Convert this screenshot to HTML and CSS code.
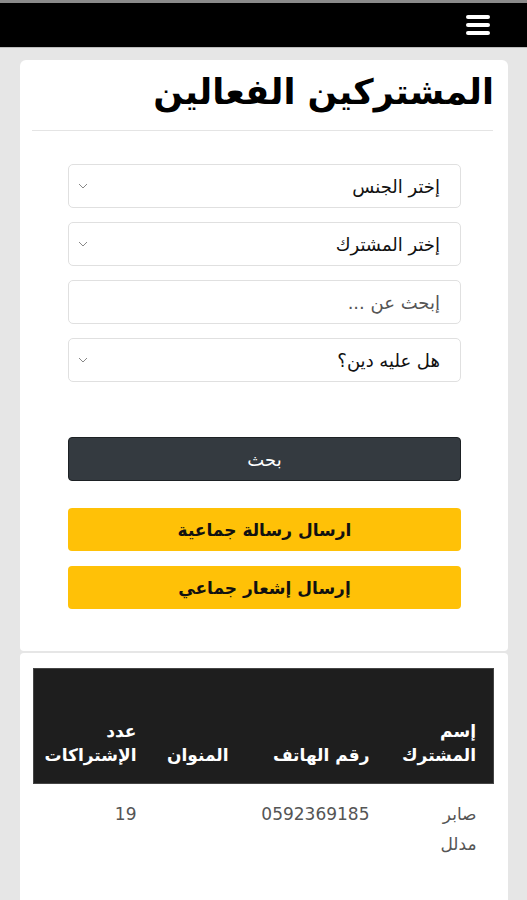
FILE: index.html
```html
<!DOCTYPE html>
<html lang="ar" dir="rtl">
<head>
<meta charset="utf-8">
<title>المشتركين الفعالين</title>
<link rel="stylesheet" href="styles.css">
</head>
<body>
<nav class="navbar">
  <button class="menu-btn" aria-label="menu">
    <svg width="24" height="21" viewBox="0 0 24 21"><rect x="0" y="0" width="24" height="4" rx="2" fill="#fff"/><rect x="0" y="8" width="24" height="4" rx="2" fill="#fff"/><rect x="0" y="16" width="24" height="4" rx="2" fill="#fff"/></svg>
  </button>
</nav>
<main class="page">
  <section class="card card-form">
    <h1 class="title">المشتركين الفعالين</h1>
    <hr class="sep">
    <form class="filters">
      <div class="field select"><span>إختر الجنس</span><svg class="chev" width="10" height="6" viewBox="0 0 10 6"><path d="M1 1 L5 5 L9 1" fill="none" stroke="#888" stroke-width="1"/></svg></div>
      <div class="field select"><span>إختر المشترك</span><svg class="chev" width="10" height="6" viewBox="0 0 10 6"><path d="M1 1 L5 5 L9 1" fill="none" stroke="#888" stroke-width="1"/></svg></div>
      <div class="field input"><span class="ph">إبحث عن ...</span></div>
      <div class="field select"><span>هل عليه دين؟</span><svg class="chev" width="10" height="6" viewBox="0 0 10 6"><path d="M1 1 L5 5 L9 1" fill="none" stroke="#888" stroke-width="1"/></svg></div>
      <div class="btn btn-dark">بحث</div>
      <div class="btn btn-yellow">ارسال رسالة جماعية</div>
      <div class="btn btn-yellow btn-second">إرسال إشعار جماعي</div>
    </form>
  </section>
  <section class="card card-table">
    <table class="table">
      <colgroup><col class="w1"><col class="w2"><col class="w3"><col class="w4"></colgroup>
      <thead>
        <tr><th class="c1">إسم المشترك</th><th class="c2">رقم الهاتف</th><th class="c3">المنوان</th><th class="c4">عدد الإشتراكات</th></tr>
      </thead>
      <tbody>
        <tr><td>صابر<br>مدلل</td><td>0592369185</td><td></td><td>19</td></tr>
      </tbody>
    </table>
  </section>
</main>
</body>
</html>
```
FILE: styles.css
```css
* { box-sizing: border-box; }
html, body { margin: 0; padding: 0; }
body {
  background: #e6e6e6;
  font-family: "DejaVu Sans", "Noto Sans", sans-serif;
  color: #000;
  height: 900px;
  overflow: hidden;
}
.navbar {
  height: 48px;
  background: #000;
  border-top: 3px solid #8a8a8a;
  border-bottom: 1px solid #bdbdbd;
  display: flex;
  align-items: center;
  padding-right: 37px;
}
.menu-btn {
  background: none;
  border: 0;
  padding: 0;
  display: flex;
  margin-top: 1px;
}
.page {
  padding: 12px 19px 0 20px;
}
.card {
  background: #fff;
  border-radius: 6px;
}
.card-form {
  padding: 8px 15px 42px 12px;
  border-bottom-left-radius: 4px;
  border-bottom-right-radius: 4px;
}
.title {
  margin: 0;
  font-size: 35px;
  font-weight: 700;
  line-height: 48px;
  text-align: right;
  margin-right: -1px;
}
.sep {
  border: 0;
  border-top: 1px solid #e4e4e4;
  margin: 14px 0 33px;
}
.filters {
  padding: 0 32px 0 36px;
  display: flex;
  flex-direction: column;
}
.field {
  height: 44px;
  border: 1px solid #e0e0e0;
  border-radius: 5px;
  display: flex;
  align-items: center;
  justify-content: space-between;
  padding: 0 20px 0 9px;
  font-size: 18px;
  color: #111;
  margin-bottom: 14px;
}
.ph { color: #555; }
.chev { display: block; }
.btn {
  height: 44px;
  border-radius: 4px;
  display: flex;
  align-items: center;
  justify-content: center;
  font-size: 17px;
  font-weight: 700;
}
.btn-dark {
  background: #343a40;
  border: 1px solid #1d2124;
  color: #fff;
  font-weight: 400;
  font-size: 18px;
  margin-top: 41px;
  margin-bottom: 27px;
}
.btn-yellow {
  background: #ffc107;
  color: #111;
  height: 43px;
}
.btn-second { margin-top: 15px; }
.card-table {
  margin-top: 2px;
  padding: 15px 14px 0 14px;
  height: 260px;
  border-radius: 4px 4px 0 0;
}
.table {
  width: 100%;
  border-collapse: collapse;
  table-layout: fixed;
}
.w1 { width: 112px; }
.w2 { width: 141px; }
.w3 { width: 92px; }
.w4 { width: 115px; }
.table thead th {
  background: #1e1e1e;
  color: #fff;
  border-top: 1px solid #454545;
  border-bottom: 1px solid #454545;
  font-size: 17px;
  font-weight: 700;
  text-align: right;
  vertical-align: bottom;
  line-height: 24px;
  padding: 12px 12px 16px 4px;
  height: 115px;
}
.table thead th.c1 { border-right: 1px solid #454545; padding-right: 17px; }
.table thead th.c4 { border-left: 1px solid #454545; }
.table tbody td {
  font-size: 17px;
  color: #555;
  text-align: right;
  vertical-align: top;
  padding: 15px 12px 12px 4px;
  line-height: 30px;
}
.table tbody td:first-child { padding-right: 17px; }
```
